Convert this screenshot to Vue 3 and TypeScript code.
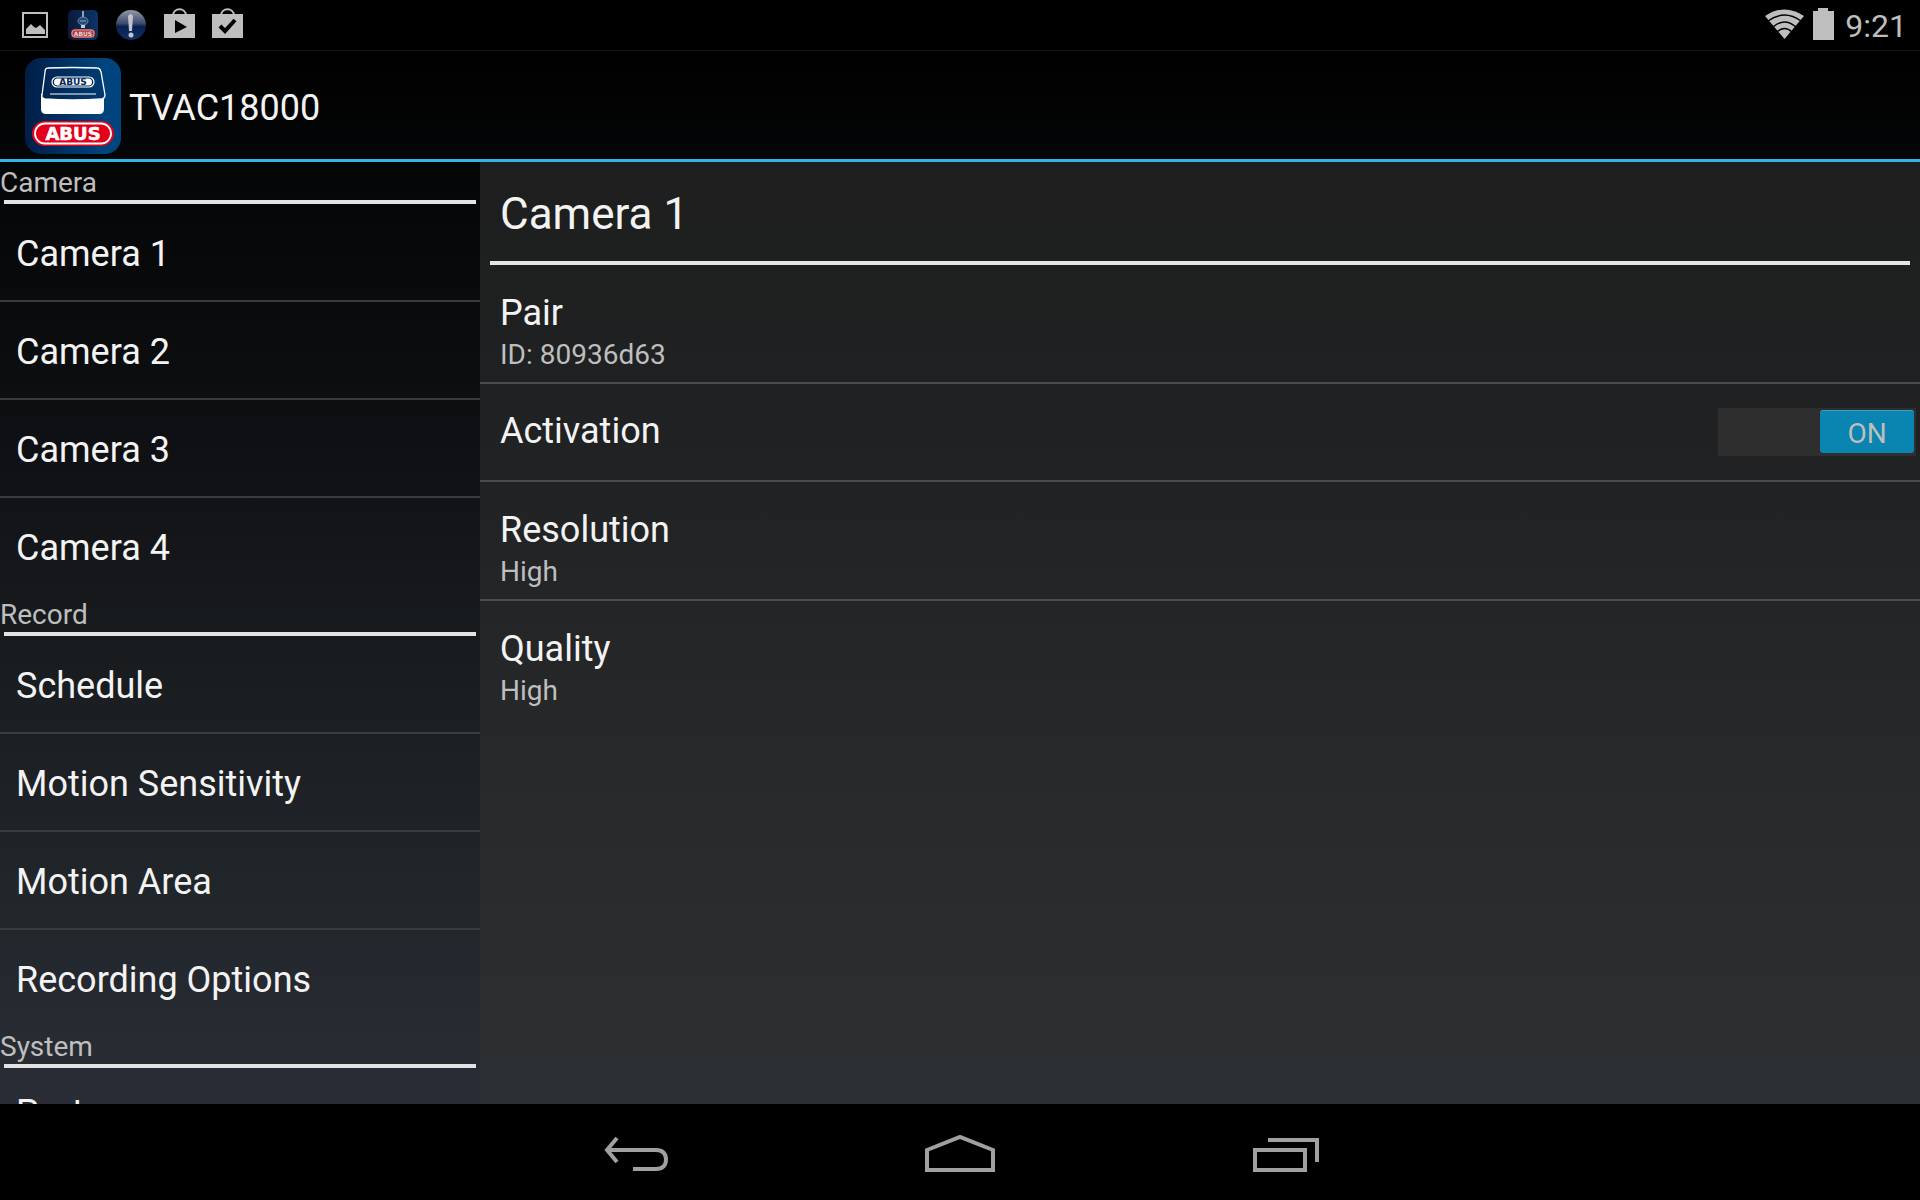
<script setup lang="ts">
import { ref } from 'vue'

interface Section {
  title: string
  items: string[]
  compact?: boolean
}

const sections: Section[] = [
  { title: 'Camera', items: ['Camera 1', 'Camera 2', 'Camera 3', 'Camera 4'] },
  { title: 'Record', items: ['Schedule', 'Motion Sensitivity', 'Motion Area', 'Recording Options'] },
  { title: 'System', items: ['Port'], compact: true },
]

const selected = ref('Camera 1')
const active = ref(true)
</script>

<template>
  <div class="screen">
    <header class="status">
      <div class="notes">
        <svg class="note" viewBox="0 0 30 32" aria-hidden="true">
          <rect x="3" y="5" width="24" height="24" fill="none" stroke="#bebebe" stroke-width="2" />
          <path d="M6 26V21l5-5 3 3 2 1 4-3 5 5v4z" fill="#bebebe" />
        </svg>
        <svg class="note" viewBox="0 0 30 32" aria-hidden="true">
          <defs>
            <linearGradient id="mini" x1="0" x2="1"><stop offset="0" stop-color="#0a1a3c" /><stop offset="1" stop-color="#0b3564" /></linearGradient>
          </defs>
          <rect x="0" y="2" width="30" height="30" rx="5" fill="url(#mini)" />
          <path d="M15 3v7M15 17v3" stroke="#8fa3bd" stroke-width="2" />
          <ellipse cx="15" cy="13" rx="5" ry="4" fill="#23487a" stroke="#7088a8" />
          <path d="M12 13h6" stroke="#8fa3bd" />
          <rect x="13" y="17" width="4" height="3" fill="#c8ccd2" />
          <rect x="3" y="21" width="24" height="9" rx="4" fill="#b5363c" />
          <rect x="4" y="22" width="22" height="7" rx="3" fill="none" stroke="#d49a9c" />
          <text x="15" y="28" class="brand" font-size="6" text-anchor="middle" fill="#e0d4d4">ABUS</text>
        </svg>
        <svg class="note" viewBox="0 0 30 32" aria-hidden="true">
          <defs>
            <linearGradient id="ball" x1="0" x2="0" y1="0" y2="1"><stop offset="0" stop-color="#9299a8" /><stop offset=".45" stop-color="#3c4a6c" /><stop offset=".55" stop-color="#07204f" /><stop offset="1" stop-color="#123266" /></linearGradient>
          </defs>
          <circle cx="15" cy="17" r="15" fill="url(#ball)" />
          <path d="M12 8q3-4 5 0l-1 15h-3z" fill="#c0c4cc" />
          <circle cx="15" cy="27" r="2.5" fill="#c0c4cc" />
        </svg>
        <svg class="note bag" viewBox="0 0 31 32" aria-hidden="true">
          <path d="M9 8c0-9 13-9 13 0" fill="none" stroke="#bebebe" stroke-width="2" />
          <path d="M0 6h31v24H0z" fill="#bebebe" />
          <path d="M11 12v13l12-6z" fill="#000" />
        </svg>
        <svg class="note bag" viewBox="0 0 31 32" aria-hidden="true">
          <path d="M9 8c0-9 13-9 13 0" fill="none" stroke="#bebebe" stroke-width="2" />
          <path d="M0 6h31v24H0z" fill="#bebebe" />
          <path d="M8 18l5 5 10-11" fill="none" stroke="#000" stroke-width="4" />
        </svg>
      </div>
      <div class="system">
        <svg class="wifi" viewBox="0 0 39 32" aria-hidden="true">
          <path d="M19.500 31L0 8Q19.500-5 39 8z" fill="#bebebe" />
          <g fill="none" stroke="#000" stroke-width="1.500">
            <path d="M3 13Q19.500 1 36 13M8 19Q19.500 9 31 19M12 24Q19.500 17 27 24" />
          </g>
        </svg>
        <svg class="battery" viewBox="0 0 21 32" aria-hidden="true">
          <path d="M0 3h5V0h10v3h6v29H0z" fill="#bebebe" />
        </svg>
        <time class="clock">9:21</time>
      </div>
    </header>

    <div class="bar">
      <svg class="logo" viewBox="0 0 96 96" aria-hidden="true">
        <defs>
          <linearGradient id="tile" x1="0" x2="1"><stop offset="0" stop-color="#011d47" /><stop offset=".8" stop-color="#00447d" /><stop offset="1" stop-color="#004580" /></linearGradient>
          <linearGradient id="lid" x1="0" x2="1"><stop offset="0" stop-color="#012552" /><stop offset="1" stop-color="#013b72" /></linearGradient>
        </defs>
        <rect width="96" height="96" rx="16" fill="url(#tile)" />
        <path d="M16 36v15q0 5 5 5h53q5 0 5-5V36z" fill="#fff" />
        <path d="M23 10q25-1 49 0 3 0 4 4l4 23q0 3-3 4-29 2-57 0-4-1-3-4l3-23q0-4 3-4z" fill="url(#lid)" stroke="#fff" stroke-width="1.300" />
        <rect x="27" y="19" width="42" height="10" rx="5" fill="#012a59" stroke="#fff" stroke-width="1.200" />
        <rect x="29" y="20.500" width="38" height="7" rx="3.500" fill="#fff" />
        <text x="48" y="27" class="brand" font-size="9" text-anchor="middle" fill="#012a59">ABUS</text>
        <path d="M25 36h46" stroke="#fff" stroke-width="1.200" />
        <rect x="7" y="63" width="82" height="25" rx="12.500" fill="#e2001a" />
        <rect x="10" y="65.500" width="76" height="20" rx="10" fill="none" stroke="#fff" stroke-width="1.800" />
        <text x="48" y="82" class="brand" font-size="18" text-anchor="middle" fill="#fff" stroke="#fff" stroke-width=".6">ABUS</text>
      </svg>
      <h1 class="app">TVAC18000</h1>
    </div>

    <main class="body">
      <nav class="side" aria-label="Settings">
        <section v-for="section in sections" :key="section.title">
          <h2 class="group">{{ section.title }}</h2>
          <ul class="list" :class="{ compact: section.compact }">
            <li v-for="item in section.items" :key="item" class="entry">
              <button type="button" class="link" @click="selected = item">{{ item }}</button>
            </li>
          </ul>
        </section>
      </nav>

      <section class="detail">
        <h2 class="title">{{ selected }}</h2>
        <button type="button" class="pref">
          <span class="name">Pair</span>
          <span class="value">ID: 80936d63</span>
        </button>
        <label class="pref toggle">
          <span class="name">Activation</span>
          <span class="switch">
            <input v-model="active" type="checkbox" role="switch" class="check" />
            <span class="thumb" :class="{ off: !active }">{{ active ? 'ON' : 'OFF' }}</span>
          </span>
        </label>
        <button type="button" class="pref">
          <span class="name">Resolution</span>
          <span class="value">High</span>
        </button>
        <button type="button" class="pref">
          <span class="name">Quality</span>
          <span class="value">High</span>
        </button>
      </section>
    </main>

    <footer class="keys">
      <button type="button" class="key" aria-label="Back">
        <svg viewBox="0 0 72 40" aria-hidden="true">
          <path d="M8 15h48c7 0 10 4 10 9.500s-3 9.500-10 9.500H33" fill="none" stroke="#a0a0a0" stroke-width="4" />
          <path d="M17 3L7 15l10 12" fill="none" stroke="#a0a0a0" stroke-width="4" />
        </svg>
      </button>
      <button type="button" class="key" aria-label="Home">
        <svg viewBox="0 0 72 40" aria-hidden="true">
          <path d="M3 35V15L36 2l33 13v20z" fill="none" stroke="#a0a0a0" stroke-width="4" />
        </svg>
      </button>
      <button type="button" class="key" aria-label="Recent apps">
        <svg viewBox="0 0 72 40" aria-hidden="true">
          <rect x="7" y="15" width="50" height="20" fill="none" stroke="#a0a0a0" stroke-width="4" />
          <path d="M20 5h49v22" fill="none" stroke="#a0a0a0" stroke-width="4" />
        </svg>
      </button>
    </footer>
  </div>
</template>

<style>
body {
  margin: 0;
  background: #000;
}
</style>

<style scoped>
.screen {
  display: flex;
  flex-direction: column;
  height: 100vh;
  overflow: hidden;
  background: #000;
  color: #f3f3f3;
  font-family: Roboto, "Noto Sans", sans-serif;
}

button {
  border: 0;
  margin: 0;
  background: none;
  color: inherit;
  font: inherit;
  text-align: left;
  cursor: pointer;
}

h1,
h2,
ul {
  margin: 0;
  padding: 0;
  font-weight: 400;
  list-style: none;
}

.brand {
  font-family: "DejaVu Sans", sans-serif;
  font-weight: 700;
}

.status {
  box-sizing: border-box;
  display: flex;
  flex: none;
  justify-content: space-between;
  height: 51px;
  padding: 8px 13px 0 20px;
  border-bottom: 1px solid #131313;
}

.notes,
.system {
  display: flex;
  align-items: flex-start;
}

.notes {
  gap: 18px;
}

.note {
  width: 30px;
  height: 32px;
}

.bag {
  width: 31px;
}

.bag + .bag {
  margin-left: -1px;
}

.system {
  gap: 9px;
}

.wifi {
  width: 39px;
  height: 32px;
}

.battery {
  width: 21px;
  height: 32px;
}

.clock {
  margin-left: 2px;
  color: #bebebe;
  font-size: 32px;
  line-height: 36px;
}

.bar {
  box-sizing: border-box;
  display: flex;
  flex: none;
  align-items: center;
  gap: 8px;
  height: 111px;
  padding: 2px 0 0 25px;
  border-bottom: 3px solid #33b5e5;
  background: linear-gradient(#000, #050607);
}

.logo {
  width: 96px;
  height: 96px;
}

.app {
  padding-top: 4px;
  font-size: 36px;
  line-height: 42px;
}

.body {
  display: flex;
  flex: 1;
  min-height: 0;
}

.side {
  width: 25%;
  overflow: hidden;
  background: linear-gradient(#040506, #101114 32%, #181b1e 50%, #22272c 80%, #2a2d35);
}

.group {
  height: 38px;
  color: #bebebe;
  font-size: 28px;
  line-height: 42px;
}

.group::after {
  content: "";
  display: block;
  height: 4px;
  margin: -4px 4px 0;
  background: #e2e4e4;
}

.list {
  padding-top: 4px;
}

.entry + .entry {
  border-top: 2px solid #393b3d;
}

.link {
  display: block;
  width: 100%;
  padding: 4px 16px 0;
  font-size: 36px;
  line-height: 92px;
}

.compact .link {
  padding-top: 0;
  line-height: 90px;
}

.detail {
  flex: 1;
  background: linear-gradient(#1d1e1d, #212224 33%, #28292b 66%, #2d3032);
}

.title {
  padding: 6px 0 0 20px;
  font-size: 44px;
  line-height: 93px;
}

.title::after {
  content: "";
  display: block;
  height: 4px;
  margin: 0 10px 0 -10px;
  background: #e6e6e4;
}

.pref {
  box-sizing: border-box;
  display: flex;
  flex-direction: column;
  width: 100%;
  min-height: 98px;
  padding: 25px 20px 8px;
}

.pref + .pref {
  border-top: 2px solid #4b4c4d;
}

.name {
  font-size: 36px;
  line-height: 46px;
}

.value {
  color: #bebebe;
  font-size: 28px;
  line-height: 38px;
}

.toggle {
  flex-direction: row;
  align-items: center;
  justify-content: space-between;
  padding: 0 4px 0 20px;
  cursor: pointer;
}

.toggle .name {
  padding-bottom: 2px;
}

.switch {
  box-sizing: border-box;
  display: flex;
  justify-content: flex-end;
  position: relative;
  width: 198px;
  height: 48px;
  padding: 2px;
  background: #2d2e2d;
}

.check {
  position: absolute;
  inset: 0;
  width: 100%;
  height: 100%;
  margin: 0;
  appearance: none;
  cursor: pointer;
}

.thumb {
  box-sizing: border-box;
  width: 94px;
  height: 43px;
  border-top: 1px solid #3f9dbf;
  border-radius: 3px;
  background: #0a84b0;
  color: #bebebe;
  font-size: 28px;
  line-height: 45px;
  text-align: center;
}

.thumb.off {
  margin-right: auto;
  border-top-color: #666;
  background: #4a4a4a;
}

.keys {
  box-sizing: border-box;
  display: flex;
  flex: none;
  align-items: center;
  justify-content: center;
  gap: 164px;
  height: 96px;
  padding-top: 6px;
}

.key {
  width: 160px;
  padding: 0 44px;
}

.key svg {
  display: block;
  width: 72px;
  height: 40px;
  overflow: visible;
}
</style>
